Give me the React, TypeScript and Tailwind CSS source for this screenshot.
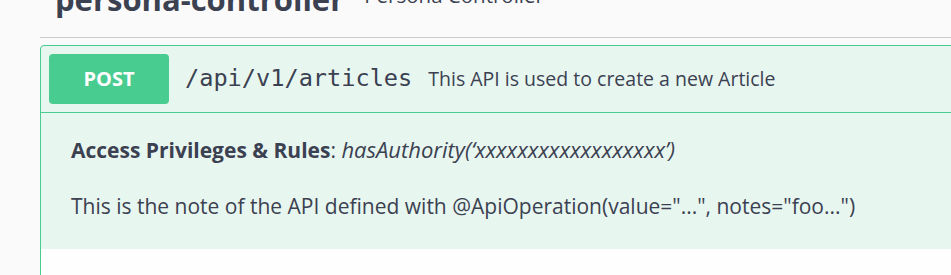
import React from "react";

export default function App() {
  return (
    <div className="w-[951px] h-[275px] overflow-hidden bg-[#fafafa] text-[#3b4151] [font-family:'Open_Sans',sans-serif]">
      <div className="ml-[40px] h-[38px] border-b border-[#cccccc] flex items-end pl-[15px]">
        <div className="flex items-end gap-[20px] mb-[22px]">
          <span className="text-[31px] leading-[31px] font-bold">persona-controller</span>
          <span className="text-[20.5px] leading-[20px] mb-[10px]">Persona Controller</span>
        </div>
      </div>
      <div className="ml-[40px] mt-[7px] w-[930px] border border-[#49cc90] rounded-[4px] bg-[#e8f6f0] overflow-hidden">
        <div className="flex items-center p-[8px] border-b border-[#49cc90]">
          <div className="w-[120px] h-[50px] rounded-[4px] bg-[#49cc90] flex items-center justify-center text-white font-bold text-[20px]">
            POST
          </div>
          <span className="ml-[16px] text-[23.6px] font-normal [font-family:'DejaVu_Sans_Mono',monospace] leading-none">
            /api/v1/articles
          </span>
          <span className="ml-[16px] text-[19.5px] leading-none">This API is used to create a new Article</span>
        </div>
        <div className="pl-[30px] pt-[22px] pb-[28px] text-[21px] leading-[30px]">
          <p className="h-[30px]">
            <span className="font-bold">Access Privileges &amp; Rules</span>:{" "}
            <i className="text-[22px] leading-none">hasAuthority(‘xxxxxxxxxxxxxxxxxx’)</i>
          </p>
          <p className="mt-[26px]">
            This is the note of the API defined with @ApiOperation(value="...", notes="foo...")
          </p>
        </div>
        <div className="h-[40px] bg-[#fefefe]"></div>
      </div>
    </div>
  );
}
